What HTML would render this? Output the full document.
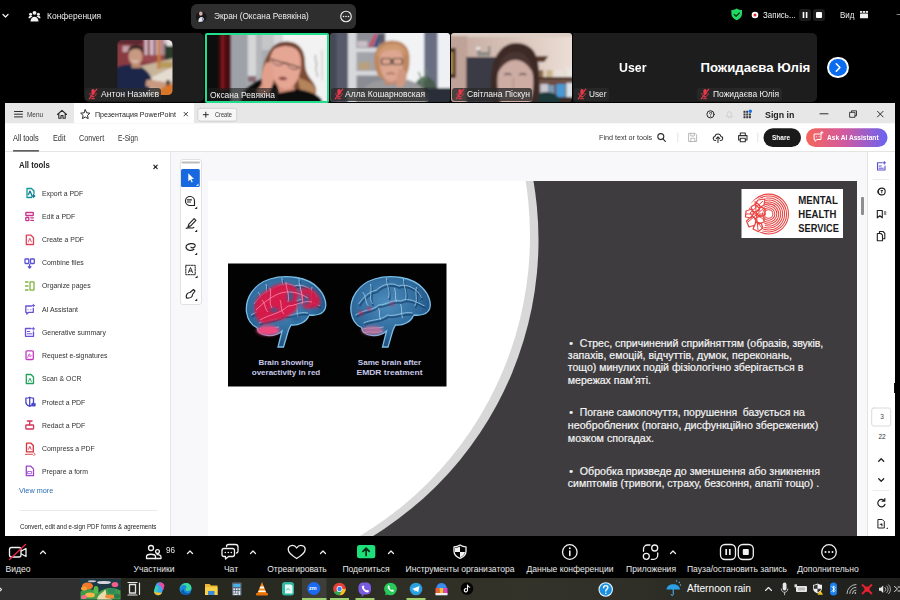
<!DOCTYPE html>
<html lang="uk">
<head>
<meta charset="utf-8">
<title>Конференция</title>
<style>
*{margin:0;padding:0;box-sizing:border-box}
html,body{width:900px;height:600px;overflow:hidden;background:#000}
body{position:relative;font-family:"Liberation Sans",sans-serif;color:#fff}
.a{position:absolute}
.t{position:absolute;white-space:nowrap;line-height:1;transform-origin:0 50%}
.c{transform-origin:50% 50%;text-align:center}
/* zoom header */
#pill{left:190.700px;top:4.300px;width:165.500px;height:24.500px;border-radius:6px;background:#2e2e2e}
.tile{position:absolute;top:33px;height:69.300px;border-radius:5px;background:#1d1d1d;overflow:hidden}
.lab{position:absolute;left:1.500px;bottom:1px;height:13.500px;background:rgba(42,42,42,.8);border-radius:3px}
.lab span{position:absolute;left:15.500px;top:1.600px;font-size:9px;line-height:10px;white-space:nowrap;transform-origin:0 50%;color:#f2f2f2}
.mic{position:absolute;left:2.500px;top:-.2px;width:10px;height:12px}
/* acrobat */
#acro{left:5px;top:103px;width:890px;height:433px;background:#f8f7f9;overflow:hidden;color:#2c2c2c}
#tabbar{left:0;top:.4px;width:890px;height:20.100px;background:#e7e7e7}
#tab{left:69px;top:.4px;width:120px;height:20.100px;background:#fff}
#tools{left:0;top:20.500px;width:890px;height:28.500px;background:#fff;border-bottom:1px solid #e4e4e4}
#left{left:0;top:49px;width:166px;height:384px;background:#fff;border-right:1px solid #e6e6e6}
#right{left:862px;top:49px;width:28px;height:384px;background:#fff;border-left:1px solid #e3e3e3}
#page{left:203px;top:78px;width:649px;height:355px;background:#fff;overflow:hidden}
.li{position:absolute;left:37px;margin-top:.3px;font-size:8px;color:#303030;white-space:nowrap;line-height:8px;transform-origin:0 50%;transform:scaleX(.86)}
/* bottom bars */
#zbar{left:0;top:536px;width:900px;height:42px;background:#000}
.zl{position:absolute;top:564px;font-size:9px;line-height:10px;color:#e8e8e8;white-space:nowrap;transform:translateX(-50%) scaleX(.95)}
#task{left:0;top:578px;width:900px;height:22px;background:linear-gradient(90deg,#22231c 0,#24251d 15%,#2a2b22 35%,#34332a 58%,#2e2e27 72%,#242520 85%,#1f201d 100%)}
</style>
</head>
<body>
<!-- ZOOM HEADER -->
<div class="t" style="left:47px;top:12px;font-size:9px;transform:scaleX(.94);color:#ececec">Конференция</div>
<div class="a" id="pill"></div>
<div class="t" style="left:214px;top:12px;font-size:9px;transform:scaleX(.92);color:#ececec">Экран (Оксана Ревякіна)</div>
<div class="t" style="left:763px;top:11px;font-size:8.5px;transform:scaleX(.93);color:#ececec">Запись...</div>
<div class="t" style="left:840px;top:11px;font-size:8.5px;transform:scaleX(.94);color:#ececec">Вид</div>

<!-- TILES -->
<div class="tile" id="t1" style="left:83.5px;width:120px">
<svg class="a" style="left:0;top:0" width="120" height="69" viewBox="83.5 33 120 69">
 <defs><clipPath id="c1"><rect x="117" y="40" width="55" height="55" rx="4.500"/></clipPath><filter id="f1" x="-5%" y="-5%" width="110%" height="110%"><feGaussianBlur stdDeviation=".9"/></filter></defs>
 <g clip-path="url(#c1)"><g filter="url(#f1)">
  <rect x="112" y="36" width="66" height="64" fill="#8a3a42"/>
  <rect x="112" y="36" width="30" height="8" fill="#5a2a30"/>
  <rect x="122" y="46" width="8" height="6" fill="#c8a0aa"/>
  <rect x="144" y="38" width="22" height="17" fill="#d4bcc6"/><rect x="147" y="38" width="2.500" height="17" fill="#8a4a5a"/><rect x="153" y="38" width="2.500" height="17" fill="#96586a"/><rect x="161" y="38" width="2" height="17" fill="#a06a7a"/>
  <rect x="140" y="55" width="34" height="7" fill="#9a4a50"/>
  <rect x="164" y="44" width="10" height="16" fill="#2a3a2a"/><rect x="166" y="38" width="8" height="8" fill="#e8e4e4"/>
  <path d="M140,66L174,58V100H130Z" fill="#c8b49a"/>
  <path d="M150,78L174,66V80L158,86Z" fill="#e4dcd0"/>
  <rect x="157" y="38" width="3" height="31" fill="#c47a3a"/>
  <path d="M160,62h12v6h-14z" fill="#b89a5a"/>
  <!-- shirt -->
  <path d="M112,70c6,-5 14,-6 20,-5c6,0 12,3 16,8c3,4 4,8 2,12l-6,15h-32z" fill="#1e2848"/>
  <!-- arm -->
  <path d="M146,80c6,-1 14,3 26,2v7c-10,1 -20,-1 -27,-3z" fill="#c89a80"/>
  <rect x="166" y="80" width="3" height="8" fill="#2a2a2a"/>
  <!-- guitar -->
  <path d="M158,92c4,-6 10,-8 16,-7v15h-18z" fill="#d8762a"/>
  <!-- neck/face/hair -->
  <rect x="131" y="60" width="9" height="8" fill="#b88a70"/>
  <ellipse cx="135" cy="56.500" rx="7" ry="8.500" fill="#c89a82"/>
  <path d="M127.500,54c-1,-6 3,-9.500 8,-9.500c5,0 9,3 7.500,9c-2,-4 -5,-4.500 -8,-4.500c-3,0 -6,1 -7.500,5z" fill="#3a2a26"/>
  <path d="M131,60c2,2 5,2 7,.5" stroke="#f0e0d8" stroke-width="1" fill="none"/>
 </g></g>
</svg>
<div class="lab" style="width:76px"><svg class="mic" viewBox="0 0 10 12" fill="none" stroke="#e8384a" stroke-linecap="round"><rect x="3.400" y="1" width="3.200" height="5.800" rx="1.600" fill="#e8384a" stroke="none"/><path d="M1.800,5.500c0,4.200 6.400,4.200 6.400,0M5,8.700v1.800M3.300,10.700h3.400" stroke-width=".9"/><path d="M1.200,10.800l7.600,-9.600" stroke-width="1.200"/></svg><span style="transform:scaleX(.96)">Антон Назмієв</span></div></div>
<div class="tile" id="t2" style="left:205px;width:124px;top:33px;height:70px;border-radius:2px;border:2px solid #22dd8c;background:#999">
<svg class="a" style="left:0;top:0" width="120" height="66" viewBox="207 35 120 66">
 <defs><filter id="f2" x="-5%" y="-5%" width="110%" height="110%"><feGaussianBlur stdDeviation="1"/></filter></defs>
 <g filter="url(#f2)">
  <rect x="200" y="30" width="134" height="76" fill="#a9adb2"/>
  <rect x="200" y="30" width="31" height="76" fill="#0c0808"/>
  <rect x="219.500" y="30" width="11" height="60" fill="#5c0c14"/><rect x="222" y="30" width="1.500" height="60" fill="#8a1a22"/><rect x="226.500" y="30" width="1.500" height="60" fill="#2a0408"/>
  <rect x="231" y="30" width="16" height="76" fill="#9ea2a8"/>
  <rect x="248" y="30" width="8" height="46" fill="#d4d6d8"/>
  <rect x="256" y="30" width="6" height="52" fill="#b4b6ba"/>
  <rect x="262" y="30" width="14" height="20" fill="#c4c6c8"/><rect x="274" y="30" width="10" height="16" fill="#d8d8da"/>
  <rect x="248" y="76" width="8" height="6" fill="#8a6a72"/>
  <rect x="283" y="30" width="51" height="76" fill="#f2f2f2"/>
  <path d="M316,55c-3,4 3,8 0,12c-2,4 3,6 1,10" stroke="#b8b8b8" stroke-width="1.500" fill="none"/>
  <path d="M322,50v30" stroke="#dcdcdc" stroke-width="2"/>
  <!-- hair back -->
  <path d="M262,86c-1,-10 0,-22 6,-32c4,-8 10,-12 18,-12.500c12,-.5 19,8 19,20c0,8 2,13 6,18c4,5 7,10 4,16l-14,4l-30,-8z" fill="#7c4c34"/>
  <path d="M297,76c5,4 10,4 15,8c4,4 5,9 2,13l-12,0z" fill="#b4845c"/>
  <!-- shirt -->
  <path d="M240,108c0,-10 3,-19 12,-24c4,-3 8,-5 12,-6l8,6l30,6c8,2 16,4 20,10v8z" fill="#0e0e10"/>
  <!-- neck -->
  <path d="M276,80h16l3,10l-16,3z" fill="#d4907c"/>
  <!-- face -->
  <path d="M270,63c0,-12 6,-18.500 15,-18.500c10,0 16,7 16,18c0,11 -4,24 -14,26.500c-9,1 -17,-12 -17,-26z" fill="#e6a694"/>
  <path d="M269,53c3,-8 10,-11.500 17,-11c8,.5 14,5 15.500,12c-4,-5 -9,-8 -15.500,-8c-6,0 -12,2 -17,7z" fill="#6e4030"/>
  <!-- glasses -->
  <path d="M271,59l13,4M287,63.500l13,4M284,63l3,.5" stroke="#3a2a2a" stroke-width="1.300" fill="none"/>
  <path d="M272,60c0,5 10,7.500 11.500,3M288,64.500c0,5 10,6.500 11.500,2.500" stroke="#4a3838" stroke-width=".9" fill="none"/>
  <!-- mouth -->
  <path d="M278,78c3,-2 7,-1.500 9.500,.5c-2,2.500 -7,2.500 -9.500,-.5z" fill="#8a4440"/>
  <!-- hand -->
  <path d="M262,87c-1,-8 0,-17 3,-23c2,-3 6,-2 7,1c2,6 3,12 1,18c-1,4 -3,8 -4,10h-8z" fill="#e2a08c"/>
  <path d="M262,84l-6,8l14,4z" fill="#d8987e"/>
 </g>
</svg>
<div class="lab" style="left:0;bottom:0;width:71px;height:13px;background:rgba(30,30,30,.62)"><span style="left:3px;top:1.500px;transform:scaleX(.94)">Оксана Ревякіна</span></div></div>
<div class="tile" id="t3" style="left:329.5px;width:120px;border-radius:3px">
<svg class="a" style="left:0;top:0" width="120" height="69" viewBox="329.5 33 120 69">
 <defs><filter id="f3" x="-5%" y="-5%" width="110%" height="110%"><feGaussianBlur stdDeviation="1"/></filter></defs>
 <g filter="url(#f3)">
  <rect x="322" y="28" width="136" height="80" fill="#565a6a"/>
  <rect x="322" y="28" width="14" height="80" fill="#444856"/>
  <rect x="347.500" y="28" width="38" height="80" fill="#d6d8dc"/>
  <rect x="356" y="28" width="30" height="20" fill="#8e9098"/><rect x="356" y="52" width="30" height="19" fill="#a2a4aa"/><rect x="356" y="75.500" width="30" height="30" fill="#8a8c94"/>
  <rect x="357" y="41" width="10" height="6" fill="#c8c0c4"/>
  <path d="M368,47l6,-13h3l-5,13z" fill="#c84a6a"/><path d="M373,47l5,-13h3l-4,13z" fill="#3a4a7a"/><rect x="379" y="34" width="5" height="13" fill="#5a5a68"/>
  <rect x="358" y="62" width="12" height="8" fill="#b8a080"/>
  <rect x="385" y="28" width="39" height="80" fill="#f1f3f5"/>
  <rect x="424" y="28" width="13" height="80" fill="#6a6e82"/>
  <rect x="437" y="28" width="21" height="80" fill="#eef0f4"/>
  <!-- plant / chair -->
  <path d="M412,90c2,-8 8,-14 14,-14c6,2 10,8 10,14z" fill="#3f5844" opacity=".85"/>
  <path d="M418,72l4,10M426,68l-1,12" stroke="#6a8a6a" stroke-width="1.200"/>
  <path d="M424,88h34v20h-40z" fill="#2a2e38"/>
  <!-- shirt -->
  <path d="M358,108c0,-14 6,-24 18,-27l22,-2c14,0 24,6 28,16v13z" fill="#9a9a9c"/>
  <!-- neck -->
  <path d="M384,76h14l1,8l-15,1z" fill="#c08a72"/>
  <!-- hair -->
  <path d="M374,66c-2,-14 4,-25 17,-25.500c13,-.5 19,8 18,20c0,8 -2,14 -5,18l-24,0c-3,-3 -5,-8 -6,-12.500z" fill="#bd8860"/>
  <!-- face -->
  <path d="M379,60c0,-8 5,-12 12,-12c8,0 12,5 12,13c0,10 -4,20 -12,21c-7,0 -12,-10 -12,-22z" fill="#dca690"/>
  <path d="M376,58c2,-10 8,-14 16,-14c8,0 13,4 14,12c-4,-5 -9,-7 -15,-6c-6,0 -11,3 -15,8z" fill="#cf9a72"/>
  <!-- glasses -->
  <rect x="381" y="58.500" width="9.500" height="6" rx="1.500" fill="none" stroke="#2a2426" stroke-width="1.200"/><rect x="392.500" y="58.500" width="9.500" height="6" rx="1.500" fill="none" stroke="#2a2426" stroke-width="1.200"/>
  <path d="M386,74c3,-1 6,-1 8,0" stroke="#9a5a54" stroke-width="1.200" fill="none"/>
  <!-- hand -->
  <path d="M398,70c3,-2 7,-1 8,3c1,5 -1,10 -4,14l-6,0c0,-6 0,-12 2,-17z" fill="#d09880"/>
 </g>
</svg>
<div class="lab" style="width:97px"><svg class="mic" viewBox="0 0 10 12" fill="none" stroke="#e8384a" stroke-linecap="round"><rect x="3.400" y="1" width="3.200" height="5.800" rx="1.600" fill="#e8384a" stroke="none"/><path d="M1.800,5.500c0,4.200 6.400,4.200 6.400,0M5,8.700v1.800M3.300,10.700h3.400" stroke-width=".9"/><path d="M1.200,10.800l7.600,-9.600" stroke-width="1.200"/></svg><span style="left:14px;transform:scaleX(.945)">Алла Кошарновская</span></div></div>
<div class="tile" id="t4" style="left:450.7px;width:121.5px;border-radius:3px">
<svg class="a" style="left:0;top:0" width="121.5" height="69" viewBox="450.7 33 121.5 69">
 <defs><filter id="f4" x="-5%" y="-5%" width="110%" height="110%"><feGaussianBlur stdDeviation="1"/></filter>
 <linearGradient id="w4" x1="0" x2="1"><stop offset="0" stop-color="#c2a69c"/><stop offset=".5" stop-color="#d8c2b8"/><stop offset="1" stop-color="#eee2da"/></linearGradient></defs>
 <g filter="url(#f4)">
  <rect x="444" y="28" width="136" height="80" fill="url(#w4)"/>
  <rect x="444" y="28" width="136" height="9" fill="#dccdc4"/>
  <rect x="444" y="36" width="23" height="72" fill="#bfa298"/>
  <rect x="444" y="48" width="11.500" height="30" fill="#4a3420"/><rect x="446" y="52" width="7" height="22" fill="#a8884a"/>
  <rect x="466" y="57" width="30" height="50" fill="#3a3a44"/>
  <path d="M477,56v-8h3v4h8v-6h2v10z" fill="#8a8a84"/><rect x="476" y="47" width="4" height="3" fill="#e8e8e8"/>
  <!-- right shelves -->
  <path d="M536,56h12l-4,6h-8z" fill="#5a3a2c"/>
  <rect x="534" y="77" width="46" height="3.500" fill="#4a2e24"/>
  <rect x="538" y="70" width="5" height="7" fill="#8a6a4a"/><rect x="546" y="70" width="6" height="7" fill="#c8b48a"/><rect x="555" y="70" width="9" height="7" fill="#e8e0d8"/><rect x="566" y="67" width="8" height="10" fill="#e8e4e0"/>
  <rect x="534" y="80.500" width="46" height="28" fill="#6a4a3c"/>
  <rect x="540" y="84" width="8" height="13" fill="#c8c8d0"/><rect x="548" y="85" width="6" height="12" fill="#7a9ab8"/><rect x="556" y="84" width="9" height="13" fill="#4a9ad4"/><rect x="566" y="83" width="8" height="14" fill="#d8e0e8"/>
  <rect x="534" y="97" width="46" height="10" fill="#3a2a28"/>
  <path d="M526,108c2,-10 10,-16 20,-16c8,0 14,4 16,16z" fill="#1c3838"/>
  <!-- hair -->
  <path d="M492,108c-3,-20 -2,-40 4,-52c5,-9 12,-13 20,-13c10,0 18,5 21,16c3,12 2,30 0,49z" fill="#3c2a26"/>
  <!-- face -->
  <path d="M497,82c0,-16 6,-26 18,-26c12,0 18,10 18,26c0,12 -3,20 -6,26h-24c-4,-8 -6,-16 -6,-26z" fill="#cdaca4"/>
  <path d="M497,74c1,-14 8,-22 18,-22c10,0 17,8 18,22c-4,-8 -10,-14 -18,-14c-8,0 -14,6 -18,14z" fill="#4a3430"/>
  <path d="M504,75c2,-1.500 5,-1.500 7,0M519,75c2,-1.500 5,-1.500 7,0" stroke="#5a4444" stroke-width="1.400" fill="none"/>
  <path d="M513,78v10" stroke="#b8948c" stroke-width="1.500"/>
 </g>
</svg>
<div class="lab" style="width:80px"><svg class="mic" viewBox="0 0 10 12" fill="none" stroke="#e8384a" stroke-linecap="round"><rect x="3.400" y="1" width="3.200" height="5.800" rx="1.600" fill="#e8384a" stroke="none"/><path d="M1.800,5.500c0,4.200 6.400,4.200 6.400,0M5,8.700v1.800M3.300,10.700h3.400" stroke-width=".9"/><path d="M1.200,10.800l7.600,-9.600" stroke-width="1.200"/></svg><span style="left:14.500px;transform:scaleX(.95)">Світлана Піскун</span></div></div>
<div class="tile" id="t5" style="left:572.5px;width:124px;border-radius:0"><div class="t" style="left:46.800px;top:28px;font-size:13px;font-weight:700;transform:scaleX(.95)">User</div><div class="lab" style="width:35px"><svg class="mic" viewBox="0 0 10 12" fill="none" stroke="#e8384a" stroke-linecap="round"><rect x="3.400" y="1" width="3.200" height="5.800" rx="1.600" fill="#e8384a" stroke="none"/><path d="M1.800,5.500c0,4.200 6.400,4.200 6.400,0M5,8.700v1.800M3.300,10.700h3.400" stroke-width=".9"/><path d="M1.200,10.800l7.600,-9.600" stroke-width="1.200"/></svg><span style="left:15.100px;transform:scaleX(.92)">User</span></div></div>
<div class="tile" id="t6" style="left:695.5px;width:121.5px;border-radius:0 5px 5px 0"><div class="t" style="left:5px;top:28px;font-size:13.2px;font-weight:700">Пожидаєва Юлія</div><div class="lab" style="width:85px"><svg class="mic" viewBox="0 0 10 12" fill="none" stroke="#e8384a" stroke-linecap="round"><rect x="3.400" y="1" width="3.200" height="5.800" rx="1.600" fill="#e8384a" stroke="none"/><path d="M1.800,5.500c0,4.200 6.400,4.200 6.400,0M5,8.700v1.800M3.300,10.700h3.400" stroke-width=".9"/><path d="M1.200,10.800l7.600,-9.600" stroke-width="1.200"/></svg><span style="transform:scaleX(.94)">Пожидаєва Юлія</span></div></div>
<div class="a" style="left:827.200px;top:56.800px;width:21.400px;height:21.400px;border-radius:50%;background:#fff"></div>
<div class="a" style="left:829px;top:58.800px;width:17.500px;height:17.500px;border-radius:50%;background:#0b6cf0"></div>
<svg class="a" style="left:827px;top:57px" width="21" height="21" viewBox="0 0 21 21" fill="none" stroke="#fff" stroke-width="1.600" stroke-linecap="round" stroke-linejoin="round"><path d="M9.300,6.800l3.600,3.700l-3.600,3.700"/></svg>

<!-- ACROBAT WINDOW -->
<div class="a" id="acro">
 <div class="a" id="tabbar"></div>
 <div class="a" id="tab"></div>
 <div class="a" id="tools"></div>
 <!-- tab bar content -->
 <svg class="a" style="left:0;top:0" width="890" height="49" viewBox="5 103 890 49" fill="none" stroke="#2c2c2c" stroke-width="1.1" stroke-linecap="round" stroke-linejoin="round">
  <path d="M14.500,111.500h8M14.500,114.200h8M14.500,116.900h8" stroke-width="1"/>
  <path d="M57.500,114.500L62,110.300L66.500,114.500M58.800,113.500V118.200H61V115.500H63V118.200H65.200V113.500" stroke-width="1.100"/>
  <path d="M85.300,109.800L86.700,112.800L89.900,113.200L87.500,115.400L88.200,118.600L85.300,117L82.400,118.600L83.100,115.400L80.700,113.200L83.900,112.800Z" stroke-width="1"/>
  <path d="M184,112.300l3.600,3.600M187.600,112.300l-3.600,3.600" stroke-width=".9"/>
  <rect x="197.800" y="108.300" width="39" height="12.800" rx="2.500" fill="#f6f6f6" stroke="#c9c9c9" stroke-width=".8"/>
  <path d="M203.300,114.700h5M205.800,112.200v5" stroke-width="1"/>
  <!-- right icons -->
  <circle cx="710.500" cy="114.300" r="3.600" stroke-width="1"/>
  <path d="M709.500,113.300c0,-1.600 2.200,-1.600 2.200,-.2c0,.9 -1.100,.9 -1.100,1.900M710.600,116.300v.1" stroke-width=".9"/>
  <path d="M726.500,116.500c1,-1 .7,-2.500 .9,-3.700c.3,-1.500 3.500,-1.500 3.800,0c.2,1.200 -.1,2.700 .9,3.700zM728.600,117.800h1.400" stroke="#d0d0d0" stroke-width="1"/>
  <g fill="#3a3a3a" stroke="none"><rect x="743.500" y="110.800" width="2" height="2"/><rect x="746.200" y="110.800" width="2" height="2"/><rect x="743.500" y="113.500" width="2" height="2"/><rect x="746.200" y="113.500" width="2" height="2"/><rect x="748.900" y="113.500" width="2" height="2"/><rect x="743.500" y="116.200" width="2" height="2"/><rect x="746.200" y="116.200" width="2" height="2"/><rect x="748.900" y="116.200" width="2" height="2"/></g>
  <circle cx="750.300" cy="111.200" r="1.700" fill="#1473e6" stroke="none"/>
  <path d="M820,113.800h8" stroke-width="1"/>
  <path d="M850,112.300h5v5h-5zM851.500,112.300v-1.500h5v5h-1.500" stroke-width=".9"/>
  <path d="M877.500,111.300l5.600,5.600M883.100,111.300l-5.600,5.600" stroke-width="1"/>
  <!-- toolbar2 -->
  <path d="M13.500,150.800h25" stroke="#2c2c2c" stroke-width="1.300"/>
  <circle cx="660.800" cy="136.600" r="3" stroke-width="1.100"/><path d="M663,138.900l2.300,2.400" stroke-width="1.200"/>
  <path d="M677.800,133v9M757.800,133v9" stroke="#dcdcdc" stroke-width=".8"/>
  <path d="M689,133.300h6l1.600,1.600v6.600h-7.600zM690.800,133.500v2.500h3.500v-2.500M690.800,141.300v-3h4v3" stroke="#b0b0b0" stroke-width=".9"/>
  <path d="M715.800,140.500c-3.200,.2 -3.400,-3.600 -.8,-4c.3,-3.300 5.400,-3.300 5.900,0c2.600,.3 2.400,4.200 -.7,4M718,142.500v-5.500M716.200,138.700l1.800,-1.800l1.800,1.800" stroke-width="1.050"/>
  <path d="M740.300,135.500v-2.500h5v2.500M740.300,140h-1.700v-4.400h8.400v4.400h-1.700M740.300,138.300h5v3.500h-5z" stroke-width="1.050"/>
  <rect x="763.500" y="128.300" width="37.500" height="18.700" rx="9.350" fill="#1a1a1a" stroke="none"/>
  <defs><linearGradient id="ai" x1="0" x2="1"><stop offset="0" stop-color="#f4665a"/><stop offset=".45" stop-color="#d4599c"/><stop offset="1" stop-color="#6a63f2"/></linearGradient></defs>
  <rect x="806" y="128.300" width="81.500" height="18.700" rx="9.350" fill="url(#ai)" stroke="none"/>
  <path d="M814.500,134h6.500v5.500h-4l-2,1.800v-1.800h-.5zM816.300,136.800h.1M819,136.800h.1M821.800,131.500v2.400M820.600,132.700h2.400" stroke="#fff" stroke-width="1"/>
 </svg>
 <div class="t" style="left:21.700px;top:8px;font-size:7px;transform:scaleX(.92);color:#3a3a3a">Menu</div>
 <div class="t" style="left:89.700px;top:7.500px;font-size:8px;transform:scaleX(.885);color:#222">Презентация PowerPoint</div>
 <div class="t" style="left:209.700px;top:8.900px;font-size:6.500px;transform:scaleX(.87);color:#333">Create</div>
 <div class="t" style="left:760px;top:6.500px;font-size:9.600px;font-weight:700;transform:scaleX(.92);color:#222">Sign in</div>
 <div class="t" style="left:8.300px;top:31.700px;font-size:8.200px;transform:scaleX(.895);color:#222">All tools</div>
 <div class="t" style="left:47.700px;top:31.700px;font-size:8.200px;transform:scaleX(.89);color:#333">Edit</div>
 <div class="t" style="left:74px;top:31.700px;font-size:8.200px;transform:scaleX(.88);color:#333">Convert</div>
 <div class="t" style="left:113px;top:31.700px;font-size:8.200px;transform:scaleX(.81);color:#333">E-Sign</div>
 <div class="t" style="left:593.500px;top:30.800px;font-size:8px;transform:scaleX(.9);color:#333">Find text or tools</div>
 <div class="t" style="left:767.400px;top:30.500px;font-size:7.500px;font-weight:700;transform:scaleX(.865);color:#fff">Share</div>
 <div class="t" style="left:822px;top:30.500px;font-size:7.500px;font-weight:700;transform:scaleX(.88);color:#fff">Ask AI Assistant</div>
 <div class="a" id="left">
  <div class="t" style="left:14px;top:8.500px;font-size:9px;font-weight:700;transform:scaleX(.87);color:#222">All tools</div>
  <svg class="a" style="left:0;top:0" width="166" height="384" viewBox="5 152 166 384" fill="none" stroke-width="1.3" stroke-linecap="round" stroke-linejoin="round">
   <path d="M153.800,165.200l3.400,3.400M157.200,165.200l-3.400,3.400" stroke="#222" stroke-width="1.200"/>
   <!-- export -->
   <g stroke="#12969a"><path d="M31.500,197.500h-4.500v-9h4.500l2.500,2.500v2.500"/><path d="M28.500,194.500l1.500,-3.500l1.500,3.500M31.500,196h3M33.300,194.700l1.400,1.300l-1.400,1.300" stroke="#0d7d8a"/></g>
   <!-- edit -->
   <g stroke="#c9358f"><rect x="25.800" y="212.500" width="7.500" height="3" rx=".6"/><rect x="25.800" y="217.500" width="3" height="3.200" rx=".5"/><path d="M30.800,217.800h2.600M30.800,220.400h2.600"/></g>
   <!-- create -->
   <g stroke="#e0405a"><path d="M26.300,235.200h4.700l2.500,2.500v6.800h-7.200z"/><path d="M28.300,241.800l1.500,-3.500l1.500,3.500" stroke-width=".9"/></g>
   <!-- combine -->
   <g stroke="#5a50d8"><rect x="25" y="259" width="3.800" height="4.500" rx=".5"/><rect x="30.500" y="259" width="3.800" height="4.500" rx=".5"/><path d="M29.600,264.500v3.300M28.300,266.700l1.300,1.300l1.300,-1.300"/></g>
   <!-- organize -->
   <g stroke="#7fb43c"><rect x="30" y="281.800" width="4" height="8.400" rx=".5"/><path d="M25.500,282h2.500M25.500,286h2.500M25.500,290h2.500"/></g>
   <!-- ai assistant -->
   <g stroke="#6a50d8"><path d="M25.800,306h5.500M33.300,308.500v3.800h-4.500l-2,1.700v-1.700h-1v-6.300"/><path d="M28,309.700h.1M30.800,309.700h.1M33.300,304.300v2.600M32,305.600h2.600" stroke-width="1"/></g>
   <!-- generative -->
   <g stroke="#6a50d8"><path d="M31,328.500h-5.500v7.800h8v-4.500"/><path d="M27.300,331.500h2.500M27.300,333.800h4.500M33.300,327.500v2.600M32,328.800h2.600" stroke-width="1"/></g>
   <!-- request e-sign -->
   <g stroke="#c03ac0"><rect x="26" y="350.800" width="7.300" height="8.700" rx="1"/><path d="M27.800,357.300c.8,-2.500 1.300,-3.500 1.800,-3.500c.5,0 0,3 .6,3c.5,0 .5,-1 1.300,-1" stroke-width=".9"/></g>
   <!-- scan -->
   <g stroke="#1fa35a"><path d="M26.300,374.500h4.700l2.500,2.500v6.500h-7.200z"/><path d="M28.500,381.500l1.400,-3.300l1.400,3.300" stroke-width=".9"/></g>
   <!-- protect -->
   <g stroke="#4a48c8"><path d="M29.700,397.200c1.300,.8 2.600,1 3.800,1v4c0,2 -1.800,3.300 -3.800,4.200c-2,-.9 -3.800,-2.200 -3.800,-4.200v-4c1.200,0 2.500,-.2 3.800,-1zM29.700,397.500v8.500"/><rect x="32" y="403.300" width="3.300" height="2.800" fill="#4a48c8" stroke-width=".6"/></g>
   <!-- redact -->
   <g stroke="#d8305a"><rect x="25.800" y="425" width="7.800" height="4" rx=".7"/><path d="M27.300,421h4.800M29.700,421v3.800"/></g>
   <!-- compress -->
   <g stroke="#d8303a"><path d="M26.500,443.200h4.500l2.300,2.300v6.300h-6.800z"/><path d="M28.500,449.300l1.300,-3l1.300,3M25.300,454.300h7.200M33.800,453l1.300,1.300l-1.300,1.300" stroke-width=".9"/></g>
   <!-- prepare form -->
   <g stroke="#9a48c8"><path d="M26.300,466.200h4.500l2.700,2.700v6.800h-7.200z"/><rect x="28" y="471.500" width="3.600" height="2.200" stroke-width=".8"/></g>
   <path d="M20,510.500h137" stroke="#e4e4e4" stroke-width=".8"/>
  </svg>
  <div class="li" style="top:37.4px">Export a PDF</div>
  <div class="li" style="top:60.6px">Edit a PDF</div>
  <div class="li" style="top:83.8px">Create a PDF</div>
  <div class="li" style="top:107.0px">Combine files</div>
  <div class="li" style="top:130.2px">Organize pages</div>
  <div class="li" style="top:153.5px">AI Assistant</div>
  <div class="li" style="top:176.7px">Generative summary</div>
  <div class="li" style="top:199.9px">Request e-signatures</div>
  <div class="li" style="top:223.1px">Scan &amp; OCR</div>
  <div class="li" style="top:246.3px">Protect a PDF</div>
  <div class="li" style="top:269.5px">Redact a PDF</div>
  <div class="li" style="top:292.7px">Compress a PDF</div>
  <div class="li" style="top:315.9px">Prepare a form</div>
  <div class="t" style="left:14px;top:335px;font-size:8px;transform:scaleX(.91);color:#2a6db5">View more</div>
  <div class="t" style="left:15px;top:372px;font-size:6.800px;transform:scaleX(.905);color:#222">Convert, edit and e-sign PDF forms &amp; agreements</div>
 </div>
 <!-- quick tools -->
 <div class="a" style="left:174.500px;top:56px;width:22px;height:146px;background:#fff;border:1px solid #e2e2e2;border-radius:3px"></div>
 <svg class="a" style="left:170px;top:52px" width="36" height="155" viewBox="175 155 36 155" fill="none" stroke="#222" stroke-width="1.150" stroke-linecap="round" stroke-linejoin="round">
  <path d="M182.500,162.600h16.500" stroke="#bcbcbc" stroke-width="2"/>
  <rect x="181" y="169" width="18.800" height="18" rx="1.500" fill="#1868e0" stroke="none"/>
  <path d="M188.300,173.300v8l2,-1.800l1.400,3l1.100,-.5l-1.400,-2.900h2.600z" fill="#fff" stroke="none"/>
  <path d="M198.500,183.400v2.600h-2.600z" fill="#dbe8ff" stroke="none"/>
  <path d="M190,205.500h-.5a4.500,4.500 0 1 1 5,-4.500v4.500h-4.500M187.500,199.800h4M187.500,202h3"/>
  <path d="M188,226.800l.9,-2.700l5.200,-5.400l1.800,1.700l-5.200,5.500zM186.200,228.300c2.200,-1.200 4.800,.6 7.600,-.9" />
  <path d="M194,249.300c-2.500,1.900 -8,1.200 -8,-2.200c0,-3.600 9.200,-5 9.200,-1.500c0,2.200 -3,2.800 -4.300,1.500"/>
  <path d="M185.800,265.300h9.400v9.400h-9.400z" stroke-dasharray="1.600 1.100" stroke-width="1"/><path d="M188.500,272.500l2,-5l2,5M189.200,271h2.600" stroke-width=".9"/>
  <path d="M186.500,298c-1,-3 1,-5.500 3.500,-5.500l3.500,-3l1.500,1.500l-2.500,3.500c0,2.500 -2,4 -6,3.500z"/>
  <g fill="#222" stroke="none"><path d="M197.200,206.500v2.600h-2.600zM197.200,229.500v2.600h-2.600zM197.200,252.500v2.600h-2.600zM197.600,275.500v2.600h-2.600zM197.200,298.500v2.600h-2.600z"/></g>
 </svg>
 <div class="a" id="right">
  <svg class="a" style="left:-1px;top:0" width="28" height="384" viewBox="867 152 28 384" fill="none" stroke="#222" stroke-width="1.100" stroke-linecap="round" stroke-linejoin="round">
   <g stroke="#5a4fd0"><path d="M882,162.800h-4.500v7.200h7.500v-4"/><path d="M879,166h2.300M879,168.200h4.300M884.300,161.500v2.600M883,162.800h2.600" stroke-width="1"/></g>
   <path d="M873,179.500h16" stroke="#e6e6e6" stroke-width=".8"/>
   <circle cx="881.800" cy="191.500" r="3.400"/><path d="M879.300,189c-2.600,.8 -2.600,5.500 1.500,5.800M881,190.500h1.600M881.800,190.500v2.300" stroke-width=".9"/>
   <path d="M877.300,210.500h5v7.300l-2.500,-2l-2.500,2zM884.300,212h1.600M884.300,214h1.600" />
   <path d="M879.500,233.500v-2h3.500l1.800,1.800v5.500h-2.300M877.300,233.500h3.500l1.700,1.700v5.600h-5.200z"/>
   <rect x="871.700" y="408" width="19" height="18" rx="2" stroke="#d6d6d6" stroke-width=".9" fill="#fff"/>
   <path d="M878.700,461.300l2.500,-2.500l2.500,2.500M878.700,478.800l2.500,2.500l2.500,-2.500" stroke-width="1.300"/>
   <path d="M873,490.500h16" stroke="#e6e6e6" stroke-width=".8"/>
   <path d="M884.500,501a3.700,3.700 0 1 0 .5,3.300M884.800,498.500v2.700h-2.700" stroke-width="1.200"/>
   <path d="M878.300,519.500h4l2,2v6.500h-6zM880,524.500c1.500,-1 2.500,0 2,1.500M881.800,523.800l.3,.8l-.8,.2" stroke-width="1"/>
   <path d="M887.800,527.300v1.700h-1.700z" fill="#222" stroke="none"/>
  </svg>
  <div class="t c" style="left:4.500px;top:261.500px;width:19px;font-size:6.500px;color:#444">3</div>
  <div class="t c" style="left:4.500px;top:282px;width:19px;font-size:6.500px;color:#333">22</div>
 </div>
 <div class="a" style="left:856px;top:94px;width:3px;height:18px;background:#8e8e8e;border-radius:1px"></div>
 <div class="a" style="left:889px;top:280px;width:2px;height:10px;background:#111"></div>
 <div class="a" id="page">
<svg class="a" style="left:0;top:0" width="649" height="355" viewBox="208 181 649 355" font-family="Liberation Sans, sans-serif">
 <defs>
  <radialGradient id="bg1" cx="45%" cy="38%" r="75%"><stop offset="0" stop-color="#4d8dbd"/><stop offset=".55" stop-color="#2f6a9c"/><stop offset="1" stop-color="#153a62"/></radialGradient>
  <filter id="bl1" x="-10%" y="-10%" width="120%" height="120%"><feGaussianBlur stdDeviation=".7"/></filter>
  <filter id="bl2" x="-20%" y="-20%" width="140%" height="140%"><feGaussianBlur stdDeviation="1.6"/></filter>
  <g id="brain">
   <path d="M.5,38C-1,24 8,10 24,5C40,0 62,3 72,14C79,21 81,30 79,35C77,40 70,42 63,41C61,48 52,52 45,51L42.500,56L37.500,73L32,73L36,57C28,64 12,63 11,53.500C5,51 1.500,45 .5,38Z" fill="url(#bg1)" stroke="#79bfe8" stroke-width="1.300"/>
   <g fill="none" stroke="#173f68" stroke-width="1.600" opacity=".7">
    <path d="M9,32C15,24 19,20 27,18C33,12 43,10 49,14C57,11 69,17 72,26"/>
    <path d="M6,43C15,37 23,39 29,33C37,33 43,27 51,29C59,25 67,30 75,34"/>
    <path d="M14,51C22,47 30,49 38,43C46,45 54,39 63,41"/>
    <path d="M21,12C23,20 19,26 23,32M37,6C37,14 41,18 39,26M54,7C54,15 58,20 56,28M67,15C65,22 69,28 65,34"/>
   </g>
   <g fill="none" stroke="#a4d4f0" stroke-width=".9" opacity=".85">
    <path d="M8,30C14,22 18,18 26,16C32,10 42,8 48,12C56,9 68,15 71,24"/>
    <path d="M5,41C14,35 22,37 28,31C36,31 42,25 50,27C58,23 66,28 74,32"/>
    <path d="M13,49C21,45 29,47 37,41C45,43 53,37 62,39"/>
    <path d="M20,10C22,18 18,24 22,30M36,4C36,12 40,16 38,24M53,5C53,13 57,18 55,26M66,13C64,20 68,26 64,32M12,18C16,22 14,28 18,32M44,14C46,20 44,24 46,28M28,34C30,38 28,42 30,46M50,30C52,34 50,38 52,44"/>
    <path d="M12,55C18,53 26,55 33,53M13,58.500C20,57 26,59.500 32,57.500"/>
   </g>
  </g>
 </defs>
 <rect x="208" y="181" width="649" height="355" fill="#3e3c3f"/>
 <circle cx="191" cy="240" r="347.5" fill="#d8d8d8"/>
 <circle cx="180.5" cy="236" r="349.5" fill="#fff"/>
 <!-- brain picture -->
 <rect x="228" y="263.5" width="218.5" height="123" fill="#020203"/>
 <g filter="url(#bl1)">
  <use href="#brain" x="246" y="274"/>
  <use href="#brain" x="350.5" y="274"/>
  <g filter="url(#bl2)" fill="#dc1646">
   <path d="M255,313C252,303 259,293 268,290C274,284 284,282 292,285C298,287 300,294 297,300C300,306 296,312 290,315C284,321 274,320 268,323C261,325 256,320 255,313Z" opacity=".95"/><path d="M302,288C310,286 318,292 320,299C322,305 317,309 311,308C306,311 301,307 302,301C300,296 299,291 302,288Z" opacity=".9"/>
   <ellipse cx="268" cy="330.500" rx="11.500" ry="5" fill="#f04a7e"/>
   <ellipse cx="372.500" cy="330.500" rx="11" ry="4.500" fill="#d8709c" opacity=".75"/>
   <circle cx="361" cy="313" r="2" /><circle cx="369" cy="309" r="1.800"/><circle cx="392" cy="304" r="1.600"/>
  </g>
  <g filter="url(#bl2)" fill="#2a6496" opacity=".9"><ellipse cx="290" cy="296" rx="3" ry="6"/><ellipse cx="306" cy="300" rx="2.500" ry="5"/><ellipse cx="274" cy="310" rx="4" ry="2"/><ellipse cx="296" cy="318" rx="5" ry="3"/></g>
  <g fill="none" stroke="#ff8fb6" stroke-width=".9" opacity=".85">
   <path d="M256,310C264,302 270,298 278,294C288,290 298,292 308,298M260,320C270,314 280,314 288,306C296,306 302,300 312,302M270,288C272,296 268,302 272,308M286,282C286,290 290,294 288,302M300,284C300,290 304,296 302,304M262,300C266,304 264,308 268,312M280,300C282,304 280,310 284,314"/>
  </g>
 </g>
 <g font-weight="700" font-size="8" fill="#c6c9e8" text-anchor="middle">
  <text x="286" y="365.300" textLength="55" lengthAdjust="spacingAndGlyphs">Brain showing</text>
  <text x="286" y="374.600" textLength="68.500" lengthAdjust="spacingAndGlyphs">overactivity in red</text>
  <text x="389.500" y="365.300" textLength="63.500" lengthAdjust="spacingAndGlyphs">Same brain after</text>
  <text x="389.500" y="374.600" textLength="66" lengthAdjust="spacingAndGlyphs">EMDR treatment</text>
 </g>
 <!-- logo -->
 <rect x="741.500" y="189" width="101.500" height="49" fill="#fff"/>
 <g fill="none" stroke="#ea4442" stroke-width="1.050">
  <circle cx="768.600" cy="214" r="4.30"/><circle cx="768.600" cy="214" r="6.25"/><circle cx="768.600" cy="214" r="8.20"/><circle cx="768.600" cy="214" r="10.15"/><circle cx="768.600" cy="214" r="12.10"/><circle cx="768.600" cy="214" r="14.05"/><circle cx="768.600" cy="214" r="16.00"/><circle cx="768.600" cy="214" r="17.95"/><circle cx="768.600" cy="214" r="19.90"/>
 </g>
 <path d="M766,197.500L756,199L748,206L745,214L747,224L754,231L762,232L765,226L762,214L765,202Z" fill="#fff"/>
 <g fill="none" stroke="#ea4442" stroke-width="1.250" stroke-linejoin="round">
  <path d="M765,199L758,200L755,204L759,208L764,205ZM757,203L751,207L753,212L759,211L760,206ZM752,209L746,211L745.500,217L751,218L754,213ZM752,216L746.500,221L749,227L755,225L756,219ZM756,222L753,229L758,231.500L763,228L761,223ZM761,207L756,212L759,217L765,215L765,209ZM760,215L755,219L758,224L764,222L764,217Z"/>
  <path d="M763,201L750,213L762,228M749,208L764,220M748,222L764,208M755,201L758,230M745.500,214L766,214" stroke-width="1"/>
 </g>
 <g font-weight="700" font-size="10.600" fill="#1a1a1a">
  <text x="798.300" y="203.800" textLength="39.500" lengthAdjust="spacingAndGlyphs">MENTAL</text>
  <text x="798.300" y="217.800" textLength="38" lengthAdjust="spacingAndGlyphs">HEALTH</text>
  <text x="798.300" y="231.600" textLength="40.700" lengthAdjust="spacingAndGlyphs">SERVICE</text>
 </g>
 <!-- slide text -->
 <g font-size="10.600" fill="#f4f4f4" stroke="#f4f4f4" stroke-width=".2">
  <text x="569.300" y="346.800">•</text>
  <text x="579.800" y="346.800" textLength="243.500" lengthAdjust="spacingAndGlyphs">Стрес, спричинений сприйняттям (образів, звуків,</text>
  <text x="567.800" y="359.200" textLength="224.200" lengthAdjust="spacingAndGlyphs">запахів, емоцій, відчуттів, думок, переконань,</text>
  <text x="567.800" y="371.400" textLength="235.500" lengthAdjust="spacingAndGlyphs">тощо) минулих подій фізіологічно зберігається в</text>
  <text x="567.800" y="384" textLength="83.200" lengthAdjust="spacingAndGlyphs">мережах пам’яті.</text>
  <text x="569.300" y="416.200">•</text>
  <text x="579.800" y="416.200" textLength="225" lengthAdjust="spacingAndGlyphs">Погане самопочуття, порушення&#160; базується на</text>
  <text x="567.800" y="429" textLength="250.500" lengthAdjust="spacingAndGlyphs">необроблених (погано, дисфункційно збережених)</text>
  <text x="567.800" y="441.500" textLength="86.200" lengthAdjust="spacingAndGlyphs">мозком спогадах.</text>
  <text x="569.300" y="474.600">•</text>
  <text x="579.800" y="474.600" textLength="240.200" lengthAdjust="spacingAndGlyphs">Обробка призведе до зменшення або зникнення</text>
  <text x="567.800" y="486.900" textLength="251.400" lengthAdjust="spacingAndGlyphs">симптомів (тривоги, страху, безсоння, апатії тощо) .</text>
 </g>
</svg>
 </div>
</div>

<!-- ZOOM TOOLBAR -->
<div class="a" id="zbar"></div>
<div class="zl" style="left:18px">Видео</div>
<div class="zl" style="left:153.5px">Участники</div>
<div class="zl" style="left:230.5px">Чат</div>
<div class="zl" style="left:297px">Отреагировать</div>
<div class="zl" style="left:366px">Поделиться</div>
<div class="zl" style="left:460px">Инструменты организатора</div>
<div class="zl" style="left:570px">Данные конференции</div>
<div class="zl" style="left:650.7px">Приложения</div>
<div class="zl" style="left:737px">Пауза/остановить запись</div>
<div class="zl" style="left:828px">Дополнительно</div>

<svg class="a" style="left:0;top:0" width="900" height="32" viewBox="0 0 900 32" fill="none" stroke="#f0f0f0" stroke-width="1.200" stroke-linecap="round" stroke-linejoin="round">
 <path d="M3,14.500l2.500,2.500l2.500,-2.500" stroke-width="1.300"/>
 <g fill="#f2f2f2" stroke="none"><circle cx="34.500" cy="12.800" r="1.900"/><circle cx="30.600" cy="14.300" r="1.500"/><circle cx="38.400" cy="14.300" r="1.500"/><path d="M30.500,21.500c0,-6.300 8,-6.300 8,0z"/><path d="M28.500,18.300c0,-3 3,-3 4,-1.600c-1.500,.4 -2.300,1.200 -2.500,1.600zM40.500,18.300c0,-3 -3,-3 -4,-1.600c1.500,.4 2.300,1.200 2.500,1.600z"/></g>
 <!-- avatar in pill -->
 <circle cx="201.300" cy="17" r="5.500" fill="#17171c" stroke="none"/>
 <ellipse cx="200.800" cy="13.600" rx="1.800" ry="2.200" fill="#d8b0a0" stroke="none"/>
 <path d="M198.300,21.800c0,-6 5.400,-6 5.800,-1.500c-1,1.200 -3,1.800 -5.800,1.500z" fill="#e4e4ec" stroke="none"/>
 <path d="M201.800,17.500l2.300,3l-1,1.400z" fill="#2a3a6a" stroke="none"/>
 <circle cx="346" cy="16.500" r="5.300" stroke-width="1.100"/>
 <g fill="#f0f0f0" stroke="none"><circle cx="343.500" cy="16.500" r=".8"/><circle cx="346" cy="16.500" r=".8"/><circle cx="348.500" cy="16.500" r=".8"/></g>
 <!-- shield -->
 <path d="M736.700,8.500c2,1.200 3.700,1.500 5.300,1.500v4c0,3 -2.500,5 -5.300,6.200c-2.800,-1.200 -5.300,-3.200 -5.300,-6.200v-4c1.600,0 3.300,-.3 5.300,-1.500z" fill="#22d864" stroke="none"/>
 <path d="M734.300,14.500l1.800,1.800l3.200,-3.300" stroke="#0a3a1a" stroke-width="1.300"/>
 <circle cx="755" cy="15" r="3.300" fill="#fff" stroke="none"/><circle cx="755" cy="15" r="1.500" fill="#e02828" stroke="none"/>
 <rect x="799" y="9" width="12" height="12" rx="3" fill="#1c1c1c" stroke="none"/><rect x="813" y="9" width="12" height="12" rx="3" fill="#1c1c1c" stroke="none"/>
 <path d="M803.500,12v6M806.600,12v6" stroke="#fff" stroke-width="1.600" stroke-linecap="butt"/>
 <rect x="816" y="12" width="6" height="6" rx="1" fill="#fff" stroke="none"/>
 <g fill="#f0f0f0" stroke="none"><rect x="860" y="11" width="2.200" height="1.800"/><rect x="862.900" y="11" width="2.200" height="1.800"/><rect x="865.800" y="11" width="2.200" height="1.800"/><rect x="860" y="13.500" width="8" height="4.700" rx=".5"/></g>
 <path d="M897,14.500h3" stroke="#888" stroke-width="1"/>
</svg>
<!-- zoom toolbar icons -->
<svg class="a" style="left:0;top:536px" width="900" height="42" viewBox="0 536 900 42" fill="none" stroke="#f2f2f2" stroke-width="1.300" stroke-linecap="round" stroke-linejoin="round">
 <rect x="9.500" y="547.500" width="11.500" height="9.500" rx="2"/><path d="M21.500,551l4.500,-2.500v8l-4.500,-2.500"/>
 <path d="M9.500,559.500l16,-15" stroke="#e8284a" stroke-width="1.400"/>
 <g stroke-width="1.200"><path d="M40.500,553.500l2.500,-2.500l2.500,2.500M187.500,553.500l2.500,-2.500l2.500,2.500M250.500,553.500l2.500,-2.500l2.500,2.500M320.500,553.500l2.500,-2.500l2.500,2.500M388.500,553.500l2.500,-2.500l2.500,2.500M670.500,553.500l2.500,-2.500l2.500,2.500"/></g>
 <!-- participants -->
 <circle cx="151" cy="548" r="2.500"/><path d="M146.500,558.500v-2c0,-3 9,-3 9,0v2z"/><circle cx="157.500" cy="551.500" r="1.900"/><path d="M155,558.500h6v-1.500c0,-1.800 -2,-2.600 -4,-2.300"/>
 <!-- chat -->
 <path d="M226.500,546.500c0,-1.500 1,-2 2,-2h7c1.500,0 2.500,1 2.500,2.500v4c0,1 -.5,2 -1.500,2"/>
 <path d="M224,548.500h8.500c1.200,0 2,.8 2,2v4c0,1.200 -.8,2 -2,2h-4l-3,2.500v-2.500h-1.500c-1.200,0 -2,-.8 -2,-2v-4c0,-1.200 .8,-2 2,-2z" fill="#000"/>
 <g fill="#f2f2f2" stroke="none"><circle cx="225.300" cy="552.500" r=".8"/><circle cx="228.300" cy="552.500" r=".8"/><circle cx="231.300" cy="552.500" r=".8"/></g>
 <!-- heart -->
 <path d="M296.700,558.500c-5,-3 -8.500,-6 -8.500,-9.200c0,-4.300 6,-5.300 8.500,-1.300c2.500,-4 8.500,-3 8.500,1.300c0,3.200 -3.500,6.200 -8.500,9.200z"/>
 <!-- share -->
 <rect x="357" y="545" width="18.300" height="13.300" rx="2.500" fill="#1ee07a" stroke="none"/>
 <path d="M366.100,555.500v-7M363,551.300l3.100,-3.100l3.100,3.100" stroke="#062a14" stroke-width="1.700"/>
 <!-- shield -->
 <path d="M460,545c2.200,1.400 4.200,1.800 6,1.800v4.500c0,3.400 -2.800,5.700 -6,7c-3.200,-1.300 -6,-3.600 -6,-7v-4.500c1.800,0 3.800,-.4 6,-1.800z"/>
 <path d="M460,546.500v5.500h-5c0,-1 0,-3.500 0,-4.200c2,0 3.500,-.5 5,-1.300zM460,552h5c-.3,2.500 -2.500,4.300 -5,5.300z" fill="#f2f2f2" stroke="none"/>
 <!-- info -->
 <circle cx="569.800" cy="552" r="7.300"/><path d="M569.800,551v4.500" stroke-width="1.600"/><circle cx="569.800" cy="548.300" r="1" fill="#f2f2f2" stroke="none"/>
 <!-- apps -->
 <path d="M643.500,551.300v-2.300a4,4 0 0 1 4,-4h2.500M657.700,553v2.300a4,4 0 0 1 -4,4h-2.400"/>
 <circle cx="654.700" cy="548" r="3"/><circle cx="646.300" cy="556.300" r="3"/>
 <!-- pause/stop -->
 <rect x="720.500" y="544.500" width="15" height="15" rx="4.500"/><rect x="738.300" y="544.500" width="15" height="15" rx="4.500"/>
 <path d="M726.200,549v6M729.800,549v6" stroke-width="1.700" stroke-linecap="butt"/><rect x="742.800" y="549" width="6" height="6" rx="1" fill="#f2f2f2" stroke="none"/>
 <!-- more -->
 <circle cx="829" cy="552" r="7.300"/><g fill="#f2f2f2" stroke="none"><circle cx="825.500" cy="552" r="1"/><circle cx="829" cy="552" r="1"/><circle cx="832.500" cy="552" r="1"/></g>
</svg>
<div class="t" style="left:165.500px;top:546px;font-size:9px;transform:scaleX(.9);color:#e8e8e8">96</div>

<!-- TASKBAR -->
<div class="a" id="task"></div>
<div class="a" style="left:0;top:578px;width:120.500px;height:22px;background:#2f2f2f;border-top:1px solid #3c3c3c"></div>
<svg class="a" style="left:0;top:578px" width="900" height="22" viewBox="0 578 900 22" fill="none" stroke-linecap="round" stroke-linejoin="round">
 <path d="M-1,587l2.500,2.500l-2.500,2.500" stroke="#ddd" stroke-width="1.200"/>
 <!-- search art -->
 <g stroke="none">
  <rect x="80.500" y="579" width="40" height="20.500" fill="#1d3a44"/>
  <ellipse cx="104" cy="582.500" rx="7" ry="1.600" fill="#d8d4dc"/><ellipse cx="92" cy="581.300" rx="4" ry="1" fill="#c8c4d0"/>
  <path d="M80.500,599.500v-8c6,-4 12,-3 18,1c6,-5 14,-6 22,-2v9z" fill="#3f9a4a"/>
  <path d="M97,599.500c1,-6 6,-6 8,-10c3,3 -2,7 8,10z" fill="#ecd9a8"/>
  <ellipse cx="87.500" cy="586" rx="5.500" ry="3.600" fill="#f07a2a"/><ellipse cx="84" cy="588.500" rx="3" ry="2" fill="#f4a23a"/>
  <ellipse cx="115" cy="584.500" rx="3.300" ry="2.600" fill="#f0608a"/><ellipse cx="112" cy="591" rx="4" ry="2.600" fill="#2f8a5a"/>
  <ellipse cx="96" cy="590" rx="2.500" ry="4" fill="#58b848"/><ellipse cx="90" cy="595" rx="5" ry="2.500" fill="#f4b84a"/><ellipse cx="84" cy="597" rx="3" ry="2" fill="#f06a8a"/>
  <ellipse cx="110" cy="596.500" rx="5" ry="2" fill="#f08a3a"/><ellipse cx="117" cy="596" rx="3" ry="2.500" fill="#2a7a4a"/>
 </g>
 <!-- task view -->
 <g stroke="#e6e6e6" stroke-width="1.200"><rect x="129.500" y="584.500" width="6" height="8.500" stroke-width="1.300"/><path d="M128,582.500h9M128,595h9M139.500,583v11.500" /></g>
 <!-- copilot -->
 <g stroke="none"><path d="M156,584.500c1,-2 3,-2.500 5,-2c2,.5 3,2 3,4l-2,6c-1,2.500 -3,3 -5,2.500c-2,-.5 -3,-2 -3,-4z" fill="#38a8f0"/><path d="M160,582.500c2,0 4,1 4.500,3l-1.500,5c-1,-3 -2,-5 -5,-6z" fill="#e84aa0"/><path d="M154,591c0,2 1,3.500 3,4c2,.5 4,0 5,-2.500c-3,.5 -6,0 -8,-1.500z" fill="#f6c02a"/><path d="M155.500,585.500l-1.500,5.500c1,1 2,1.500 3,1.500l1.500,-5z" fill="#3ad0b0"/></g>
 <!-- edge -->
 <g stroke="none"><circle cx="185.500" cy="589" r="6" fill="#1a8ad8"/><path d="M180,590c0,-4 3,-7 6,-7c3,0 5.500,2 5.500,5c0,2 -2,3 -4,3c-1,0 -2,-.5 -2,-1.500c0,-1 1,-1.500 1,-2.500c0,-1 -1,-2 -2.500,-2c-2,0 -4,2 -4,5z" fill="#3ad8a0"/><path d="M181,592c1,2 3,3 5.500,3c2,0 4,-1 5,-3c-1,1 -3,1.500 -5,1c-2,-.5 -3,-2 -3,-4c-1,.5 -2,1.500 -2.500,3z" fill="#0a5ab0"/></g>
 <!-- folder -->
 <g stroke="none"><path d="M205,584h4.500l1.500,1.500h6.500v9.500h-12.500z" fill="#f2b632"/><rect x="205" y="587" width="12.500" height="8" fill="#f8d24a"/><rect x="208" y="591" width="6.500" height="4" fill="#3a8ad8"/></g>
 <!-- calculator -->
 <g stroke="none"><rect x="232" y="582.500" width="9.500" height="13" rx="1" fill="#5a6a7a"/><rect x="233.300" y="584" width="7" height="3" fill="#48b0e8"/><g fill="#dfe6ee"><rect x="233.300" y="588.300" width="1.800" height="1.800"/><rect x="235.900" y="588.300" width="1.800" height="1.800"/><rect x="238.500" y="588.300" width="1.800" height="1.800"/><rect x="233.300" y="591" width="1.800" height="1.800"/><rect x="235.900" y="591" width="1.800" height="1.800"/><rect x="238.500" y="591" width="1.800" height="4"/><rect x="233.300" y="593.500" width="4.400" height="1.500"/></g></g>
 <!-- vlc -->
 <g stroke="none"><path d="M262,582l4.500,11h-9z" fill="#f08a1a"/><path d="M260.300,586.500h3.400l.8,2h-5zM258.800,590.500h6.400l.6,1.500h-7.600z" fill="#fff"/><rect x="256" y="593" width="12" height="2.500" rx=".8" fill="#e8720a"/></g>
 <!-- teal notes -->
 <g stroke="none"><rect x="282" y="582" width="12" height="13.500" rx="3" fill="#2fb8a0"/><path d="M285,584.500h6l1.500,1.500v7.500h-7.500z" fill="#e8fbf6"/><path d="M286.500,590c1,-2 2,-2 3,0" stroke="#2fb8a0" stroke-width=".9"/></g>
 <!-- zoom active -->
 <rect x="302" y="578" width="24.500" height="22" fill="#3d3e3a" stroke="none"/>
 <circle cx="313.800" cy="588.500" r="6.500" fill="#1a6af0" stroke="none"/>
 <!-- chrome -->
 <g stroke="none"><circle cx="339.500" cy="589" r="6.300" fill="#e8403a"/><path d="M339.500,589l-5.500,3.200a6.300,6.300 0 0 0 5.500,3.100l3,-5z" fill="#30a850"/><path d="M339.500,589h6.300a6.300,6.300 0 0 1 -6.300,6.300l3,-5z" fill="#f8c01a"/><circle cx="339.500" cy="589" r="2.900" fill="#fff"/><circle cx="339.500" cy="589" r="2.200" fill="#3a80f0"/></g>
 <!-- viber -->
 <g stroke="none"><rect x="358.500" y="582.500" width="12.500" height="12" rx="4.500" fill="#7a5ae0"/><path d="M362,594l-.5,3l3,-2.500z" fill="#7a5ae0"/><path d="M362.300,586c.8,-1 1.500,-.5 2,.5c.3,.7 -.5,1 -.3,1.600c.4,1 1.300,1.800 2.300,2.200c.6,.2 .9,-.6 1.600,-.3c1,.5 1.500,1.200 .5,2c-1.500,1.200 -4,-.5 -5.200,-2c-1.200,-1.500 -1.700,-3 -.9,-4z" fill="#fff"/></g>
 <!-- whatsapp -->
 <g stroke="none"><circle cx="390.500" cy="589" r="6.300" fill="#28c85a"/><path d="M385,595.500l.8,-3l2,1.500z" fill="#28c85a"/><path d="M388,586c.6,-.8 1.300,-.4 1.700,.5c.3,.6 -.4,.9 -.2,1.400c.4,.9 1.100,1.600 2,2c.5,.2 .8,-.5 1.400,-.2c.9,.4 1.300,1.100 .5,1.700c-1.300,1 -3.500,-.4 -4.600,-1.800c-1,-1.300 -1.500,-2.700 -.8,-3.600z" fill="#fff"/></g>
 <!-- telegram -->
 <g stroke="none"><circle cx="416" cy="589" r="6.300" fill="#2aa0e0"/><path d="M412,589l7.500,-3l-1.300,6.300l-2.400,-1.700l-1.200,1.200l-.2,-1.900z" fill="#fff"/></g>
 <!-- colorful app -->
 <g stroke="none"><path d="M436,590c0,-4 2,-7 5.500,-7c3.500,0 5.500,3 5.500,7z" fill="#3a8af0"/><rect x="435.500" y="588" width="4" height="6" fill="#f05a3a"/><rect x="439.500" y="588" width="4" height="6" fill="#f0c02a"/><rect x="443.500" y="588" width="4" height="6" fill="#e040c0"/><rect x="435.500" y="593" width="12" height="2.300" fill="#eee"/></g>
 <!-- tiktok -->
 <g stroke="none"><circle cx="467" cy="588.500" r="6.300" fill="#050505"/><path d="M467.500,585v5.300a1.600,1.600 0 1 1 -1.300,-1.600M467.500,585c.3,1.300 1,2 2.300,2.200" stroke="#fff" stroke-width="1.100" fill="none"/></g>
 <!-- underlines -->
 <g fill="#9fd070" stroke="none"><rect x="302" y="598" width="24.500" height="2"/><rect x="330" y="598" width="19" height="2"/><rect x="355.500" y="598" width="19" height="2"/><rect x="406.500" y="598" width="19" height="2"/></g>
 <!-- help -->
 <circle cx="605.700" cy="589.500" r="6.700" fill="#1a90e0" stroke="#e8f4ff" stroke-width="1.100"/>
 <path d="M603.600,587.800c0,-2.800 4.300,-2.800 4.300,-.3c0,1.600 -2.100,1.700 -2.100,3.500M605.800,593.300v.1" stroke="#fff" stroke-width="1.400"/>
 <!-- umbrella -->
 <path d="M666.500,589.500c.5,-7 13,-7 13.500,0z" fill="#2aa0e8" stroke="none"/><path d="M673.200,589.500v5c0,1.500 -2,1.500 -2,0" stroke="#5ab8f0" stroke-width="1"/>
 <g fill="#5ab8f0" stroke="none"><circle cx="676.500" cy="581" r=".7"/><circle cx="679.300" cy="582.500" r=".7"/><circle cx="680.500" cy="585" r=".7"/></g>
 <!-- tray -->
 <path d="M765.500,590.500l3,-3l3,3" stroke="#eee" stroke-width="1.100"/>
 <g stroke="none"><rect x="782.700" y="582.500" width="3.800" height="8" rx="1.900" fill="#e8e8e8"/><path d="M781.300,589c0,4.500 6.500,4.500 6.500,0M784.600,592.500v2.300" stroke="#ccc" stroke-width=".9" fill="none"/></g>
 <g stroke="none"><rect x="796" y="586" width="11" height="6" rx="1" fill="#e8e8e8"/><rect x="794.500" y="584.300" width="2.500" height="3" fill="#ddd"/><rect x="798" y="587.500" width="7" height="3" fill="#bbb"/></g>
 <g stroke="none"><path d="M817.500,583.500c1.500,1 3,1.200 4.500,1.200v3.500c0,2.500 -2,4.200 -4.500,5.200c-2.500,-1 -4.500,-2.700 -4.500,-5.200v-3.500c1.500,0 3,-.2 4.500,-1.200z" fill="#f2f2f2"/><path d="M817.500,584.500v4.300h-3.700v-3.200c1.300,0 2.500,-.3 3.700,-1.100zM817.500,588.800h3.700c-.3,1.800 -1.800,3 -3.700,3.800z" fill="#333"/><path d="M820.300,590.300l2.700,4.500h-5.400z" fill="#f8c020"/></g>
 <g stroke="none"><rect x="830" y="582.500" width="7" height="13" rx="3.500" fill="#1a80f0"/><path d="M831.800,586.500l3.400,4l-1.700,1.700v-6.400l1.700,1.700l-3.400,4" stroke="#fff" stroke-width=".8" fill="none"/></g>
 <g stroke="#bdbdbd" stroke-width="1" fill="none"><path d="M855.300,593l.1,0" stroke="#eee" stroke-width="1.600"/><path d="M852.500,593.500a3.500,3.500 0 0 1 3.500,-3.500M849.800,593.500a6.200,6.200 0 0 1 6.200,-6.200M847,593.500a9,9 0 0 1 9,-9"/></g>
 <g stroke="#e82030" stroke-width="1.800"><path d="M862.500,585l9,8.500M871.500,585l-9,8.500"/></g><circle cx="867" cy="589.200" r="2.600" fill="#e82030" stroke="none"/>
 <g stroke="none" fill="#e8e8e8"><path d="M879,587.800h1.800l2.400,-2.200v7.400l-2.400,-2.200h-1.800z"/></g>
 <path d="M885,587.300a2.700,2.700 0 0 1 0,4M886.800,586a4.500,4.500 0 0 1 0,6.600M888.600,584.800a6,6 0 0 1 0,9" stroke="#ccc" stroke-width=".8"/><path d="M894.500,586.500l3,2.500l-3,2.500M898,587h2M898,591h2" stroke="#ddd" stroke-width="1"/>
</svg>
<div class="t" style="left:309px;top:585.500px;font-size:5.500px;font-weight:700;color:#fff">zm</div>
<div class="t" style="left:687px;top:584px;font-size:10.2px;color:#fff">Afternoon rain</div>
</body>
</html>
